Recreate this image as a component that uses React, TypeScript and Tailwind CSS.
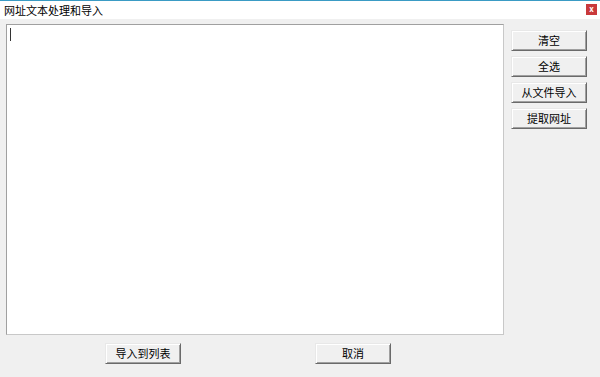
import React from 'react';

const font = { fontFamily: '"Noto Sans CJK SC", "Microsoft YaHei", sans-serif' };

function WinButton({ label, className }: { label: string; className?: string }) {
  return (
    <button
      className={`h-[21px] w-[76px] bg-[#f0f0f0] border border-t-[#e8e8e8] border-l-[#e8e8e8] border-r-[#6a6a6a] border-b-[#6a6a6a] shadow-[inset_1px_1px_0_#ffffff,inset_-1px_-1px_0_#a0a0a0] text-[11px] leading-none text-black ${className ?? ''}`}
    >
      {label}
    </button>
  );
}

export default function App() {
  return (
    <div className="w-[600px] h-[377px] bg-[#f0f0f0] flex flex-col overflow-hidden" style={font}>
      {/* title bar */}
      <div className="h-[19px] bg-white border-t border-[#3a9bc4] flex items-center justify-between pl-[4px] pr-[3px]">
        <span className="text-[11px] text-black leading-none">网址文本处理和导入</span>
        <div className="w-[11px] h-[11px] bg-[#c9393b] flex items-center justify-center text-white text-[8px] leading-none font-bold mb-[2px]">
          x
        </div>
      </div>

      <div className="flex pl-[6px] pt-[5px] gap-[7px]">
        {/* text area */}
        <div className="relative w-[498px] h-[311px] bg-white border border-t-[#a0a0a0] border-l-[#a0a0a0] border-r-[#c8c8c8] border-b-[#c8c8c8]">
          <div className="absolute left-[3px] top-[3px] w-[1px] h-[13px] bg-[#333]" />
        </div>

        {/* side buttons */}
        <div className="flex flex-col gap-[5px] pt-[6px]">
          <WinButton label="清空" />
          <WinButton label="全选" />
          <WinButton label="从文件导入" />
          <WinButton label="提取网址" />
        </div>
      </div>

      <div className="flex pt-[8px]">
        <WinButton label="导入到列表" className="ml-[105px]" />
        <WinButton label="取消" className="ml-[134px]" />
      </div>
    </div>
  );
}
